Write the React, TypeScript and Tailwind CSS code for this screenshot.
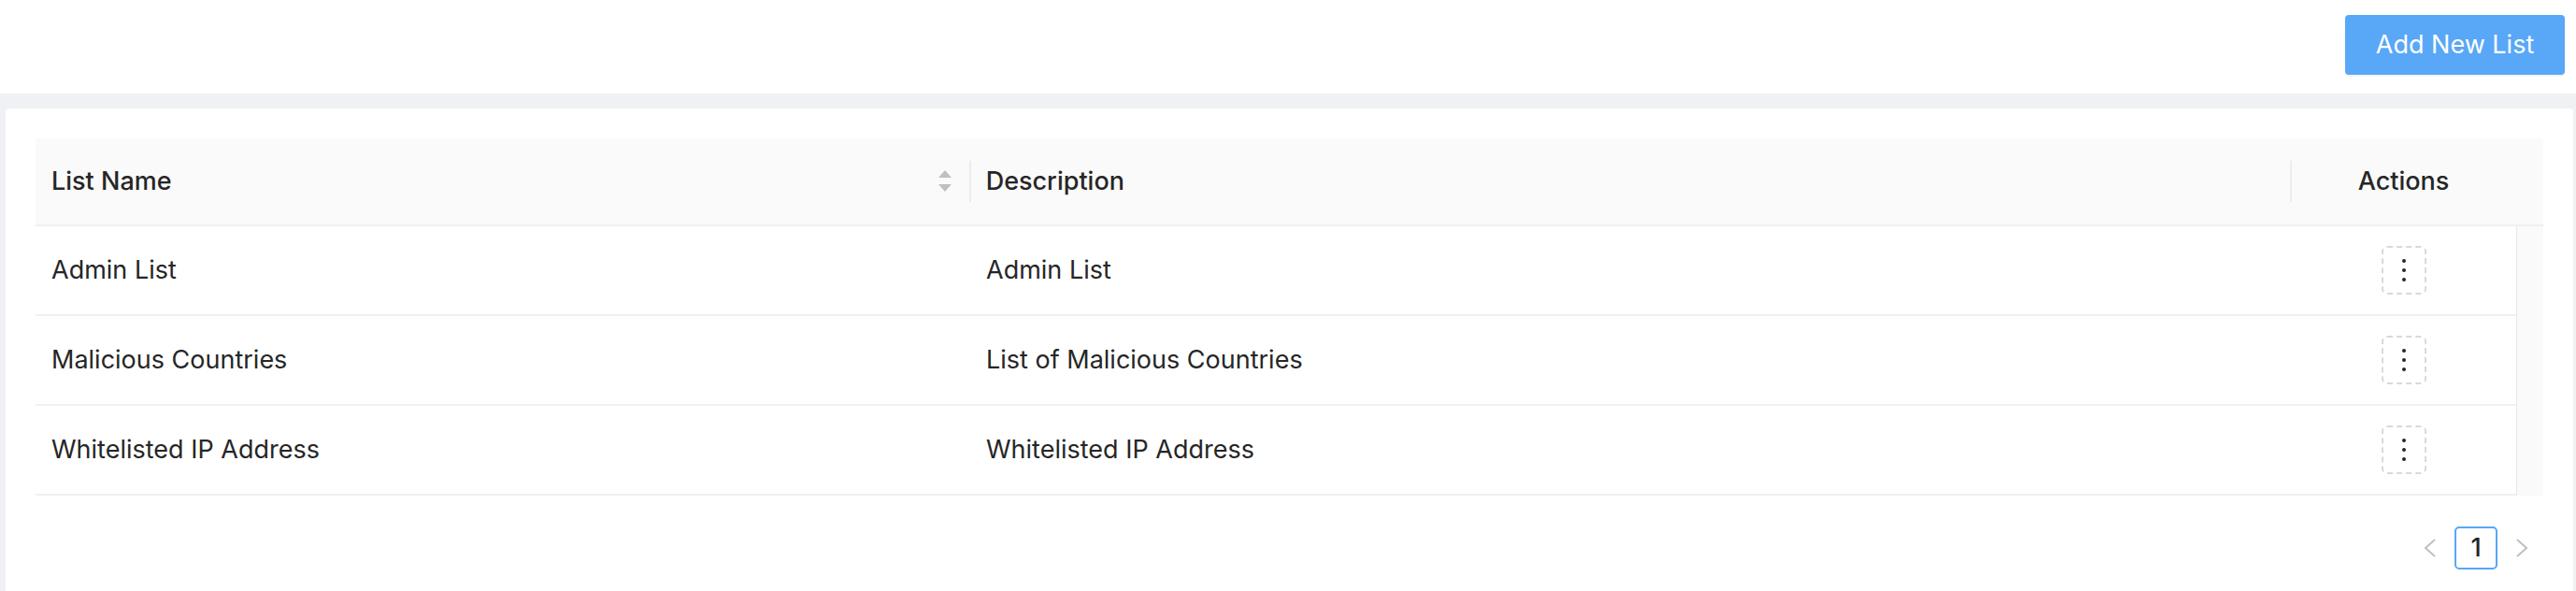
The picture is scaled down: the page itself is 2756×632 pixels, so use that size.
import React from 'react';

const rows = [
  { name: 'Admin List', description: 'Admin List' },
  { name: 'Malicious Countries', description: 'List of Malicious Countries' },
  { name: 'Whitelisted IP Address', description: 'Whitelisted IP Address' },
];

function SortIcon() {
  return (
    <svg width="14" height="24" viewBox="0 0 14 24" className="shrink-0">
      <path d="M7 0 L14 8 L0 8 Z" fill="#bfbfbf" />
      <path d="M0 15 L14 15 L7 23 Z" fill="#bfbfbf" />
    </svg>
  );
}

function MoreButton() {
  return (
    <button className="w-[48px] h-[52px] rounded-[6px] border-2 border-dashed border-[#d9d9d9] bg-white flex flex-col items-center justify-center gap-[6px]">
      <span className="w-[4px] h-[4px] rounded-full bg-[#262626]" />
      <span className="w-[4px] h-[4px] rounded-full bg-[#262626]" />
      <span className="w-[4px] h-[4px] rounded-full bg-[#262626]" />
    </button>
  );
}

function Chevron({ dir }: { dir: 'left' | 'right' }) {
  return (
    <svg width="14" height="20" viewBox="0 0 14 20">
      <path
        d={dir === 'left' ? 'M12 1 L2 10 L12 19' : 'M2 1 L12 10 L2 19'}
        fill="none"
        stroke="#bfbfbf"
        strokeWidth="2"
      />
    </svg>
  );
}

export default function App() {
  return (
    <div className="w-[2756px] h-[632px] overflow-hidden bg-[#f0f1f4] font-['Inter',sans-serif] text-[#262626]">
      {/* Top bar */}
      <div className="h-[100px] bg-white flex justify-end items-start pt-[16px] pr-[12px]">
        <button className="w-[235px] h-[64px] rounded-[4px] bg-[#59a7f7] text-white text-[27px] shadow-[0_2px_0_rgba(0,0,0,0.045)]">
          Add New List
        </button>
      </div>

      {/* Content */}
      <div className="pt-[16px] pl-[6px] pr-[3px]">
        <div className="bg-white rounded-[4px] p-[32px] h-[600px]">
          {/* Header */}
          <div className="flex h-[94px] bg-[#fafafa] border-b-2 border-[#f0f0f0] text-[27px] font-medium">
            <div className="w-[999px] flex items-center justify-between pl-[17px] pr-[19px]">
              <span>List Name</span>
              <SortIcon />
            </div>
            <div className="w-[2px] h-[44px] self-center bg-[#ececec]" />
            <div className="w-[1412px] flex items-center pl-[16px]">Description</div>
            <div className="w-[2px] h-[44px] self-center bg-[#ececec]" />
            <div className="w-[239px] flex items-center justify-center">Actions</div>
            <div className="w-[30px]" />
          </div>

          {/* Body */}
          <div className="flex">
            <div className="w-[2654px]">
              {rows.map((r) => (
                <div key={r.name} className="flex h-[96px] border-b-2 border-[#f0f0f0] text-[27px]">
                  <div className="w-[999px] flex items-center pl-[17px]">{r.name}</div>
                  <div className="w-[1414px] flex items-center pl-[18px]">{r.description}</div>
                  <div className="w-[241px] flex items-center justify-center">
                    <MoreButton />
                  </div>
                </div>
              ))}
            </div>
            <div className="w-[30px] bg-[#fafafa] border-l border-[#e8e8e8]" />
          </div>

          {/* Pagination */}
          <div className="flex justify-end items-center gap-[3px] mt-[33px]">
            <div className="w-[46px] h-[46px] flex items-center justify-center">
              <Chevron dir="left" />
            </div>
            <div className="w-[46px] h-[46px] rounded-[5px] border-2 border-[#59a7f7] flex items-center justify-center text-[27px] font-medium">
              1
            </div>
            <div className="w-[46px] h-[46px] flex items-center justify-center">
              <Chevron dir="right" />
            </div>
          </div>
        </div>
      </div>
    </div>
  );
}
